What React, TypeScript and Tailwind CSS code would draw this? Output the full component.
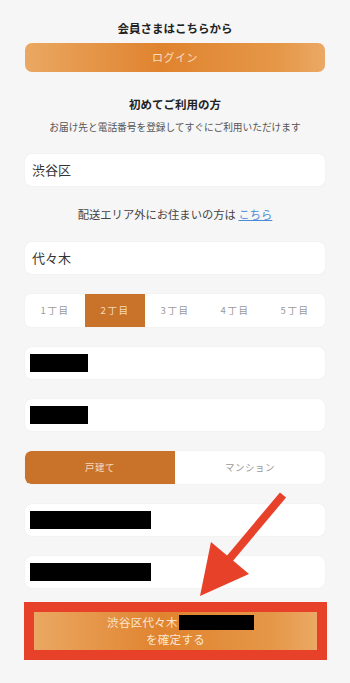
const jp = { fontFamily: '"Noto Sans CJK JP", "Noto Sans", sans-serif' };

function Field({ children }: { children: React.ReactNode }) {
  return (
    <div className="mt-[20px] flex h-[32px] items-center rounded-[7px] bg-white px-[7px] text-[13px] text-[#333] shadow-[0_0_2px_rgba(0,0,0,0.06)]">
      {children}
    </div>
  );
}

function Redacted({ w }: { w: number }) {
  return <div className={`-ml-[2px] h-[18px] bg-black ${w === 58 ? "w-[58px]" : "w-[121px]"}`} />;
}

export default function App() {
  const chome = ["1丁目", "2丁目", "3丁目", "4丁目", "5丁目"];
  return (
    <div className="relative min-h-[683px] w-[350px] overflow-hidden bg-[#f6f6f6]" style={jp}>
      <div className="mx-[25px] flex flex-col pt-[20px]">
        <div className="text-center text-[11.5px] font-bold leading-[16px] text-[#222]">会員さまはこちらから</div>
        <button className="mt-[7px] h-[29px] rounded-[7px] bg-[linear-gradient(90deg,#eaa862_0%,#e0832f_45%,#e59848_85%,#eba965_100%)] text-[11px] tracking-[0.5px] text-[#f8dcc0]">
          ログイン
        </button>

        <div className="mt-[24px] text-center text-[11.5px] font-bold leading-[16px] text-[#222]">初めてご利用の方</div>
        <div className="mt-[8px] text-center text-[9.7px] leading-[14px] text-[#555]">
          お届け先と電話番号を登録してすぐにご利用いただけます
        </div>

        <Field>渋谷区</Field>

        <div className="mt-[20px] text-center text-[11.3px] leading-[16px] text-[#444]">
          配送エリア外にお住まいの方は <span className="text-[#4a8ad8] underline">こちら</span>
        </div>

        <Field>代々木</Field>

        <div className="mt-[20px] flex h-[33px] overflow-hidden rounded-[6px] bg-white shadow-[0_0_2px_rgba(0,0,0,0.06)]">
          {chome.map((c, i) => (
            <div
              key={c}
              className={`flex flex-1 items-center justify-center text-[9.5px] tracking-[1.5px] ${
                i === 1 ? "bg-[#c9722a] text-[#f6dcc0]" : "text-[#999]"
              }`}
            >
              {c}
            </div>
          ))}
        </div>

        <Field><Redacted w={58} /></Field>
        <Field><Redacted w={58} /></Field>

        <div className="mt-[20px] flex h-[33px] overflow-hidden rounded-[6px] bg-white shadow-[0_0_2px_rgba(0,0,0,0.06)]">
          <div className="flex flex-1 items-center justify-center rounded-l-[6px] bg-[#c9722a] text-[9.5px] tracking-[0.5px] text-[#f6dcc0]">戸建て</div>
          <div className="flex flex-1 items-center justify-center text-[9.5px] tracking-[0.5px] text-[#999]">マンション</div>
        </div>

        <Field><Redacted w={121} /></Field>
        <Field><Redacted w={121} /></Field>

        <div className="-mr-[2px] -ml-[1px] mt-[14px] border-[10px] border-[#e8412a]">
          <div className="flex h-[38px] flex-col items-center justify-center bg-[linear-gradient(90deg,#eaa862_0%,#e0832f_45%,#e59848_85%,#eba965_100%)] text-[11.5px] leading-[17px] text-[#fbe6d0]">
            <div className="ml-[10px] flex items-center">
              <span className="tracking-[0.3px]">渋谷区代々木</span>
              <span className="ml-[1px] inline-block h-[15px] w-[75px] bg-black" />
            </div>
            <div className="tracking-[0.3px]">を確定する</div>
          </div>
        </div>
      </div>

      <svg className="pointer-events-none absolute left-0 top-0" width="350" height="683" viewBox="0 0 350 683">
        <line x1="283" y1="495" x2="226" y2="563" stroke="#e8412a" strokeWidth="8" />
        <polygon points="200,596 211,542 249,574" fill="#e8412a" />
      </svg>
    </div>
  );
}
